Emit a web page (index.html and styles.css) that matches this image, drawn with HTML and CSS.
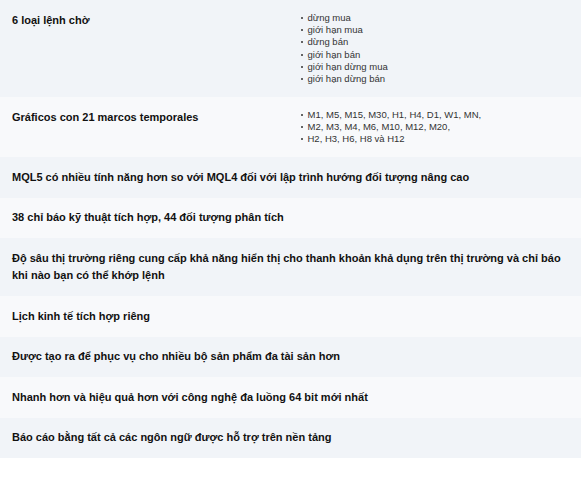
FILE: index.html
```html
<!DOCTYPE html>
<html>

<head>
    <title>MT5 tính năng</title>
    <meta charset="utf-8">
    <meta name="viewport" content="width=device-width, initial-scale=1.0">
    <link rel="stylesheet" href="styles.css">
</head>

<body>

    <section class="bang">
        <div class="dong le">
            <h3>6 loại lệnh chờ</h3>
            <ul>
                <li>dừng mua</li>
                <li>giới hạn mua</li>
                <li>dừng bán</li>
                <li>giới hạn bán</li>
                <li>giới hạn dừng mua</li>
                <li>giới hạn dừng bán</li>
            </ul>
        </div>
        <div class="dong chan">
            <h3>Gráficos con 21 marcos temporales</h3>
            <ul>
                <li>M1, M5, M15, M30, H1, H4, D1, W1, MN,</li>
                <li>M2, M3, M4, M6, M10, M12, M20,</li>
                <li>H2, H3, H6, H8 và H12</li>
            </ul>
        </div>
        <div class="dong le don">
            <h3>MQL5 có nhiều tính năng hơn so với MQL4 đối với lập trình hướng đối tượng nâng cao</h3>
        </div>
        <div class="dong chan don">
            <h3>38 chỉ báo kỹ thuật tích hợp, 44 đối tượng phân tích</h3>
        </div>
        <div class="dong le don">
            <h3>Độ sâu thị trường riêng cung cấp khả năng hiển thị cho thanh khoản khả dụng trên thị trường và chỉ báo khi nào bạn có thể khớp lệnh</h3>
        </div>
        <div class="dong chan don">
            <h3>Lịch kinh tế tích hợp riêng</h3>
        </div>
        <div class="dong le don">
            <h3>Được tạo ra để phục vụ cho nhiều bộ sản phẩm đa tài sản hơn</h3>
        </div>
        <div class="dong chan don">
            <h3>Nhanh hơn và hiệu quả hơn với công nghệ đa luồng 64 bit mới nhất</h3>
        </div>
        <div class="dong le don">
            <h3>Báo cáo bằng tất cả các ngôn ngữ được hỗ trợ trên nền tảng</h3>
        </div>
    </section>

</body>

</html>
```

FILE: styles.css
```css
body {
    margin: 0;
    padding: 0;
    background-color: #ffffff;
    font-family: 'Liberation Sans', Arial, sans-serif;
}

.bang {
    width: 100%;
}

.dong {
    display: grid;
    grid-template-columns: 1fr 1fr;
    padding: 11.5px 12px;
}

.don {
    display: block;
}

.le {
    background-color: #f1f4f8;
}

.chan {
    background-color: #f8f9fb;
}

h3 {
    margin: 0;
    font-size: 11px;
    line-height: 17.5px;
    font-weight: bold;
    color: #111111;
}

ul {
    margin: 0;
    padding: 0 0 0 17px;
    list-style: none;
}

li {
    position: relative;
    font-size: 9.5px;
    line-height: 12.35px;
    color: #333333;
}

li::before {
    content: "";
    position: absolute;
    left: -7px;
    top: 5px;
    width: 2px;
    height: 2px;
    border-radius: 50%;
    background-color: #333333;
}
```
